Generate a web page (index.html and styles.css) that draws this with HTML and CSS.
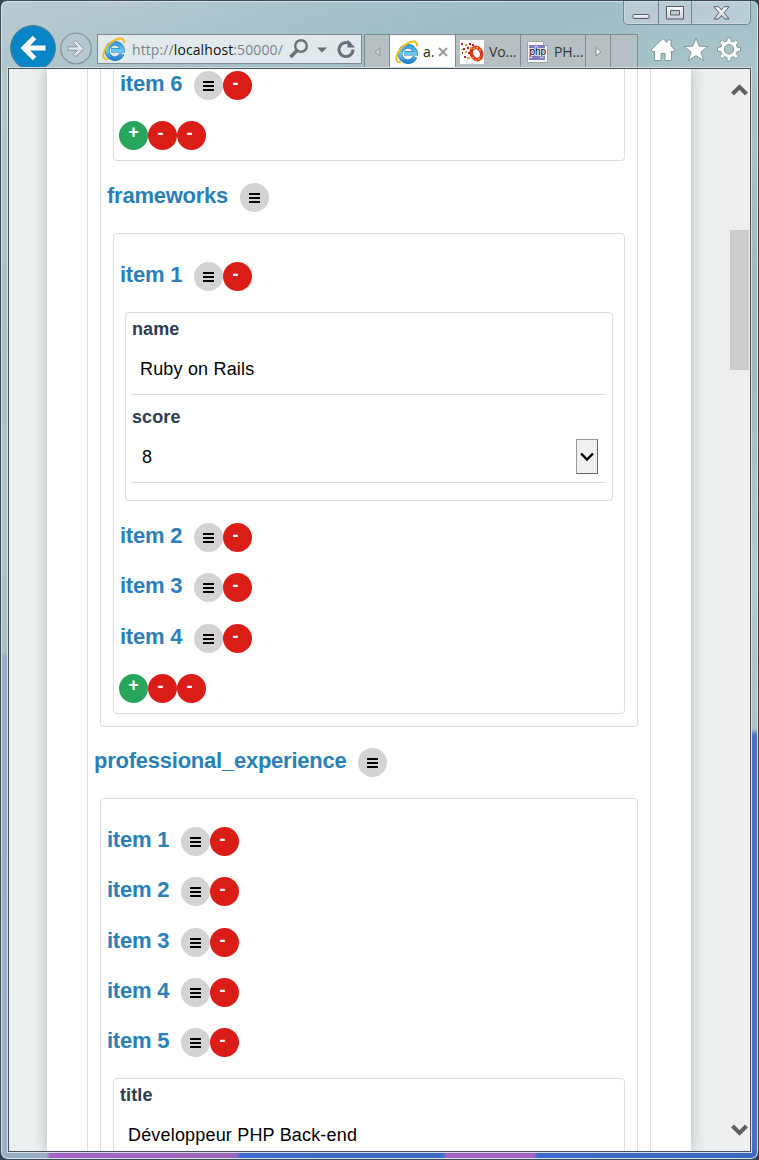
FILE: index.html
```html
<!DOCTYPE html>
<html lang="fr">
<head>
<meta charset="utf-8">
<title>localhost</title>
<link rel="stylesheet" href="styles.css">
</head>
<body>
<svg class="defs" width="0" height="0">
  <defs>
    <linearGradient id="ieblue" x1="0" y1="0" x2="0" y2="1"><stop offset="0" stop-color="#3b9de0"/><stop offset=".5" stop-color="#69cdf7"/><stop offset="1" stop-color="#2384cc"/></linearGradient>
    <linearGradient id="metal" x1="0" y1="0" x2="0" y2="1"><stop offset="0" stop-color="#fff"/><stop offset="1" stop-color="#ccd1d6"/></linearGradient>
    <symbol id="ie" viewBox="0 0 24 24">
      <path d="M20 16.800A7.700 7.700 0 1 1 20.500 13.300H9" fill="none" stroke="#2676b3" stroke-width="4.600"/>
      <path d="M20 16.800A7.700 7.700 0 1 1 20.500 13.300H9" fill="none" stroke="url(#ieblue)" stroke-width="3.400"/>
      <path d="M5 22.300C-1.500 22.500 1 11.500 9.500 5.200C15.500 .7 22.500 -.2 22 5.500" fill="none" stroke="#f7bd1d" stroke-width="2" stroke-linecap="round"/>
    </symbol>
  </defs>
</svg>
<div class="window">
  <div class="caption">
    <div class="caption-buttons">
      <span class="cap min"><svg width="18" height="7"><rect x="1" y="1.500" width="16" height="4" rx="1" fill="url(#metal)" stroke="#555b6b"/></svg></span>
      <span class="cap max"><svg width="18" height="14"><path d="M.5.500h17v12.500H.5zM4.500 4.500v4.500h9V4.500z" fill="url(#metal)" fill-rule="evenodd" stroke="#555b6b"/></svg></span>
      <span class="cap close"><svg width="17" height="14"><path d="M1 .7h4.500L8.500 4 11.500.7H16L11 6.700 16 13h-4.500l-3-3.600L5.500 13H1l5-6.300z" fill="url(#metal)" stroke="#555b6b"/></svg></span>
    </div>
  </div>
  <div class="toolbar">
    <svg class="back" width="46" height="43"><circle cx="23" cy="23" r="22.500" fill="#0785c6" stroke="#5f7d8c"/><path d="M35.500 23H14M24.500 12.500 14 23 24.500 33.500" fill="none" stroke="#fff" stroke-width="5"/></svg>
    <svg class="forward" width="32" height="33"><circle cx="16" cy="16.500" r="15.300" fill="#b4c8ce" stroke="#87969d" stroke-width="1.300"/><path d="M8 14.800h9.500L13.300 10.500l2.200-2.300 8.300 8.300-8.300 8.300-2.200-2.300 4.200-4.200H8z" fill="#dfe8eb" stroke="#87969d"/></svg>
    <div class="address">
      <svg class="ie" width="24" height="24"><use href="#ie"/></svg>
      <span class="url">http://<b>localhost</b>:50000/</span>
      <svg class="tools" width="70" height="24"><g fill="none" stroke="#687175"><circle cx="14" cy="9" r="5.800" stroke-width="2.400"/><path d="M10 13.500 3.500 20" stroke-width="3.500"/><path d="M63.300 7A7 7 0 1 0 66 12.500" stroke-width="3"/></g><path d="M30 10.500h10L35 15.500zM60.500 2.500v8h7.500z" fill="#687175"/></svg>
    </div>
    <div class="tabs">
      <div class="seg scroll"><svg width="7" height="12"><path d="M5.800 1.500v8.500L1 5.800z" fill="#c9cfd2" stroke="#8f999d"/></svg></div>
      <div class="seg tab active"><svg width="24" height="24"><use href="#ie"/></svg><span>a.</span><svg class="x" width="10" height="10"><path d="M1 1l8 8M9 1 1 9" stroke="#9a9a9a" stroke-width="2.200"/></svg></div>
      <div class="seg tab"><svg width="24" height="24"><path d="M0 0h24v24H0z" fill="#fff"/><ellipse cx="16.500" cy="13.500" rx="5" ry="6.300" fill="none" stroke="#d93420" stroke-width="3.600" transform="rotate(-25 16.500 13.500)"/><path d="M12.500 17c2 4 6 4 8.500-.5M13 9c3-3 6-1 7.500 2" fill="none" stroke="#f4a035" stroke-width="1.500" stroke-dasharray="2 1.500"/><path d="M1 3h2v2H1zM9 3h2v2H9zM3 8h2v2H3zM2 12h1v2H2zM7 7h2v2H7zM12 4h2v2h-2zM4 16h2v2H4zM8 12h2v2H8z" fill="#b81c24"/><path d="M5 4h2v2H5zM5 11h2v2H5zM1 9h2v1H1zM7 17h3v2H7zM10 7h2v2h-2z" fill="#f29a22"/></svg><span>Vo...</span></div>
      <div class="seg tab"><svg width="24" height="24"><path d="M2.500 1.500h16l4 4v17h-20z" fill="#f5f5f5" stroke="#9da3a6"/><path d="M18.500 1.500v4h4" fill="#ccc" stroke="#9da3a6"/><path d="M4 5h16v15H4z" fill="#7e7dc4"/><text x="4.500" y="15" class="php">php</text></svg><span>PH...</span></div>
      <div class="seg scroll"><svg width="7" height="12"><path d="M1 1.500v8.500L5.800 5.800z" fill="#fff" stroke="#7f8a8e"/></svg></div>
      <div class="seg"></div>
    </div>
    <div class="commands">
      <svg width="26" height="25"><path d="M13 1.500 1 13l2 2 1.500-1v9.500h6.500v-7h4v7h6.500V14l1.500 1 2-2-4-4V3h-4v2.500z" fill="#fff" stroke="#84959b"/></svg>
      <svg width="26" height="25"><path d="m13 1 3.200 8.200 8.800.3-7 5.400 2.600 8.600L13 18.600l-7.600 4.900L8 14.900 1 9.500l8.800-.3z" fill="#fff" stroke="#84959b"/></svg>
      <svg width="26" height="25"><path d="M11 1h4v3l2.500 1 2.200-2.200 2.800 2.800-2.200 2.200 1 2.500H24.500v4h-3.200l-1 2.500 2.200 2.200-2.800 2.800-2.200-2.200-2.500 1V24h-4v-3.400l-2.500-1-2.200 2.200L3.500 19l2.200-2.200-1-2.500H1.500v-4h3.200l1-2.500-2.200-2.200 2.800-2.800L8.500 5 11 4zM13 7.500a4.700 4.700 0 1 0 0 9.400 4.700 4.700 0 0 0 0-9.400z" fill="#fff" fill-rule="evenodd" stroke="#84959b"/></svg>
    </div>
  </div>
  <div class="viewport">
    <div class="page">
      <div class="sheet">
        <div class="box root">
          <div class="box cut">
            <div class="box cut list">
              <div class="row first"><h3>item 6</h3><i class="btn menu"></i><i class="btn del">-</i></div>
              <div class="row actions"><i class="btn add">+</i><i class="btn del">-</i><i class="btn del">-</i></div>
            </div>
            <div class="row group"><h3>frameworks</h3><i class="btn menu"></i></div>
            <div class="box list">
              <div class="row lead"><h3>item 1</h3><i class="btn menu"></i><i class="btn del">-</i></div>
              <div class="box form">
                <label>name</label>
                <div class="field">Ruby on Rails</div>
                <label>score</label>
                <div class="field select"><span>8</span><span class="drop"><svg width="14" height="10"><path d="M1 1.500 7 7.500 13 1.500" fill="none" stroke="#000" stroke-width="2.400"/></svg></span></div>
              </div>
              <div class="row after"><h3>item 2</h3><i class="btn menu"></i><i class="btn del">-</i></div>
              <div class="row"><h3>item 3</h3><i class="btn menu"></i><i class="btn del">-</i></div>
              <div class="row"><h3>item 4</h3><i class="btn menu"></i><i class="btn del">-</i></div>
              <div class="row actions"><i class="btn add">+</i><i class="btn del">-</i><i class="btn del">-</i></div>
            </div>
          </div>
          <div class="row section"><h3>professional_experience</h3><i class="btn menu"></i></div>
          <div class="box jobs">
            <div class="row lead"><h3>item 1</h3><i class="btn menu"></i><i class="btn del">-</i></div>
            <div class="row"><h3>item 2</h3><i class="btn menu"></i><i class="btn del">-</i></div>
            <div class="row"><h3>item 3</h3><i class="btn menu"></i><i class="btn del">-</i></div>
            <div class="row"><h3>item 4</h3><i class="btn menu"></i><i class="btn del">-</i></div>
            <div class="row"><h3>item 5</h3><i class="btn menu"></i><i class="btn del">-</i></div>
            <div class="box form">
              <label>title</label>
              <div class="field">Développeur PHP Back-end</div>
            </div>
          </div>
        </div>
      </div>
    </div>
    <div class="scrollbar">
      <svg width="17" height="14"><path d="M1.500 12 8.500 5l7 7" fill="none" stroke="#606060" stroke-width="4"/></svg>
      <div class="thumb"></div>
      <svg class="down" width="17" height="14"><path d="M1.500 2 8.500 9l7-7" fill="none" stroke="#606060" stroke-width="4"/></svg>
    </div>
  </div>
</div>
</body>
</html>
```

FILE: styles.css
```css
* { box-sizing: border-box; }
html, body { margin: 0; background: #334451; overflow: hidden; }
svg { display: block; flex: none; }
.defs { position: absolute; }

/* window frame */
.window {
  width: 759px; height: 1160px;
  display: flex; flex-direction: column;
  border: 1px solid #3d4b55; border-radius: 7px 7px 8px 8px;
  box-shadow: inset 0 0 0 1px #d5e2e6;
  background:
    linear-gradient(90deg, #9aaec4 45px, #a564c4 50px, #9a66ba 235px, #3d6bcf 240px, #3b69c5 441px, #a564c4 446px, #a564c4 532px, #3d6bcf 538px, #3a67bf) 0 100% / 100% 8px no-repeat,
    linear-gradient(#b2c8cd, #a9c0c4 270px, #acc7cd 450px, #a6c0c3 583px, #9babc8 588px, #a0afca) 0 68px / 8px 100% no-repeat,
    linear-gradient(#a7c4cc, #9db9bf 280px, #b0ccd2 500px, #a9c2c8 660px, #4a72c4 666px, #4b71bb) 100% 68px / 8px 100% no-repeat,
    linear-gradient(160deg, #bacbd0 0, #a8c2ca 35%, #9fbdc5 60%, #aac5cb 100%) 0 0 / 100% 68px no-repeat;
}
.caption { height: 24px; flex: none; display: flex; justify-content: flex-end; padding-right: 7px; }
.caption-buttons { display: flex; height: 24px; border: 1px solid #75868f; border-top: 0; border-radius: 0 0 5px 5px; background: rgba(194,210,217,.7); box-shadow: inset 0 0 0 1px #cbd9de; }
.cap { display: flex; align-items: center; justify-content: center; border-right: 1px solid #75868f; }
.min { width: 35px; padding-top: 8px; }
.max { width: 33px; }
.close { width: 58px; border: 0; }

.toolbar { height: 43px; flex: none; display: flex; align-items: flex-start; padding-left: 9px; font: 14px "Open Sans", "Noto Sans", sans-serif; }
.forward { margin: 7px 5px 0 4px; }
.address { margin-top: 9px; width: 265px; height: 30px; border: 1px solid #7b8c93; background: #e1e9ec; display: flex; align-items: center; padding-left: 4px; }
.url { width: 161px; padding-left: 6px; color: #7d8588; letter-spacing: .1px; white-space: nowrap; }
.url b { font-weight: 400; color: #111; }
.tabs { margin: 9px 0 0 2px; display: flex; height: 34px; width: 274px; border: 1px solid #7b8c93; border-bottom: 0; background: #b6c0c3; }
.seg { width: 25px; display: flex; align-items: center; border-right: 1px solid #7b8c93; }
.seg:last-child { border: 0; }
.scroll { justify-content: center; }
.tab { width: 65px; padding-left: 4px; color: #333; overflow: hidden; }
.tab:not(.active) span { padding-left: 5px; }
.tab span { letter-spacing: -.1px; white-space: nowrap; }
.active { width: 66px; padding-left: 5px; background: #fff; color: #222; }
.active span { padding-left: 4px; }
.x { margin-left: 4px; }
.php { font: 10px "Liberation Sans", Arial, sans-serif; fill: #000; stroke: #fff; stroke-width: 1.5px; paint-order: stroke; }
.commands { display: flex; gap: 7px; margin: 12px 0 0 12px; }

/* page */
.viewport { flex: none; width: 743px; height: 1084px; margin-left: 7px; border: 1px solid #46545d; box-shadow: 0 0 0 1px #d3dfe3; display: flex; overflow: hidden; background: #ebeff0; }
.page { width: 720px; height: 1082px; padding: 0 38px; overflow: hidden; }
.sheet { width: 644px; height: 1082px; padding: 0 40px; background: #fff; box-shadow: 0 0 13px rgba(0,0,0,.24); font-family: "Liberation Sans", Arial, sans-serif; }
.box { border: 1px solid #ddd; border-radius: 4px; padding: 0 12px; }
.root { height: 1100px; border-top: 0; border-bottom: 0; border-radius: 0; }
.cut { border-top: 0; border-top-left-radius: 0; border-top-right-radius: 0; padding-bottom: 12px; }
.list { padding: 0 11px 10px; }
.row { display: flex; height: 29px; margin: 21.2px 0 0 -6px; }
.list .row { margin-left: -6px; padding-left: 1px; }
.row.first { margin-top: 0; padding-top: 2px; height: 31px; }
.row.lead { margin-top: 28px; }
.row.after { margin-top: 22px; }
.list .row.actions { padding-left: 0; margin-top: 21.600px; }
.list .row.first + .row.actions { margin-top: 21.300px; }
.group { margin-top: 22px; }
.section { margin-top: 21px; }
.row.group + .box, .row.section + .box { margin-top: 21px; }
h3 { margin: 0 11.800px 0 0; font-size: 22px; line-height: 25px; font-weight: bold; letter-spacing: -.24px; color: #2980b9; white-space: nowrap; }
.btn { flex: none; width: 29px; height: 29px; border-radius: 50%; font: bold 18px/22px "Liberation Sans", Arial, sans-serif; color: #fff; text-align: center; padding-right: 3px; }
.menu { background: #d3d3d3; display: flex; padding: 10px 9px 0 9px; }
.menu::before { content: ""; width: 11px; height: 10px; background: linear-gradient(#000 2px, transparent 2px 4px, #000 4px 6px, transparent 6px 8px, #000 8px); }
.del { background: #da1e17; line-height: 24px; padding-right: 4px; }
.add { background: #27a55b; padding-right: 0; }
.form { margin-top: 21px; padding: 5px 6px 17px; }
.list .form { height: 189px; }
.jobs .form { height: 200px; }
label { display: block; height: 23px; font-size: 18px; line-height: 23px; font-weight: bold; letter-spacing: .1px; color: #2c3e50; }
.field { height: 54px; margin-bottom: 11px; padding: 0 8px; border-bottom: 1px solid #ddd; font-size: 18px; line-height: 56px; letter-spacing: .18px; color: #000; }
.select { display: flex; justify-content: space-between; align-items: flex-start; padding-left: 10px; }
.drop { width: 22px; height: 35px; margin-top: 10px; display: flex; align-items: center; justify-content: center; background: #f0f0f0; border: 1px solid #999; border-right-color: #666; border-bottom-color: #666; }

.scrollbar { width: 21px; background: #efefef; display: flex; flex-direction: column; align-items: center; padding-top: 13px; }
.thumb { width: 19px; height: 140px; margin: 134px 1px 0 1px; background: #cdcdcd; }
.down { margin-top: auto; margin-bottom: 13px; }
```
